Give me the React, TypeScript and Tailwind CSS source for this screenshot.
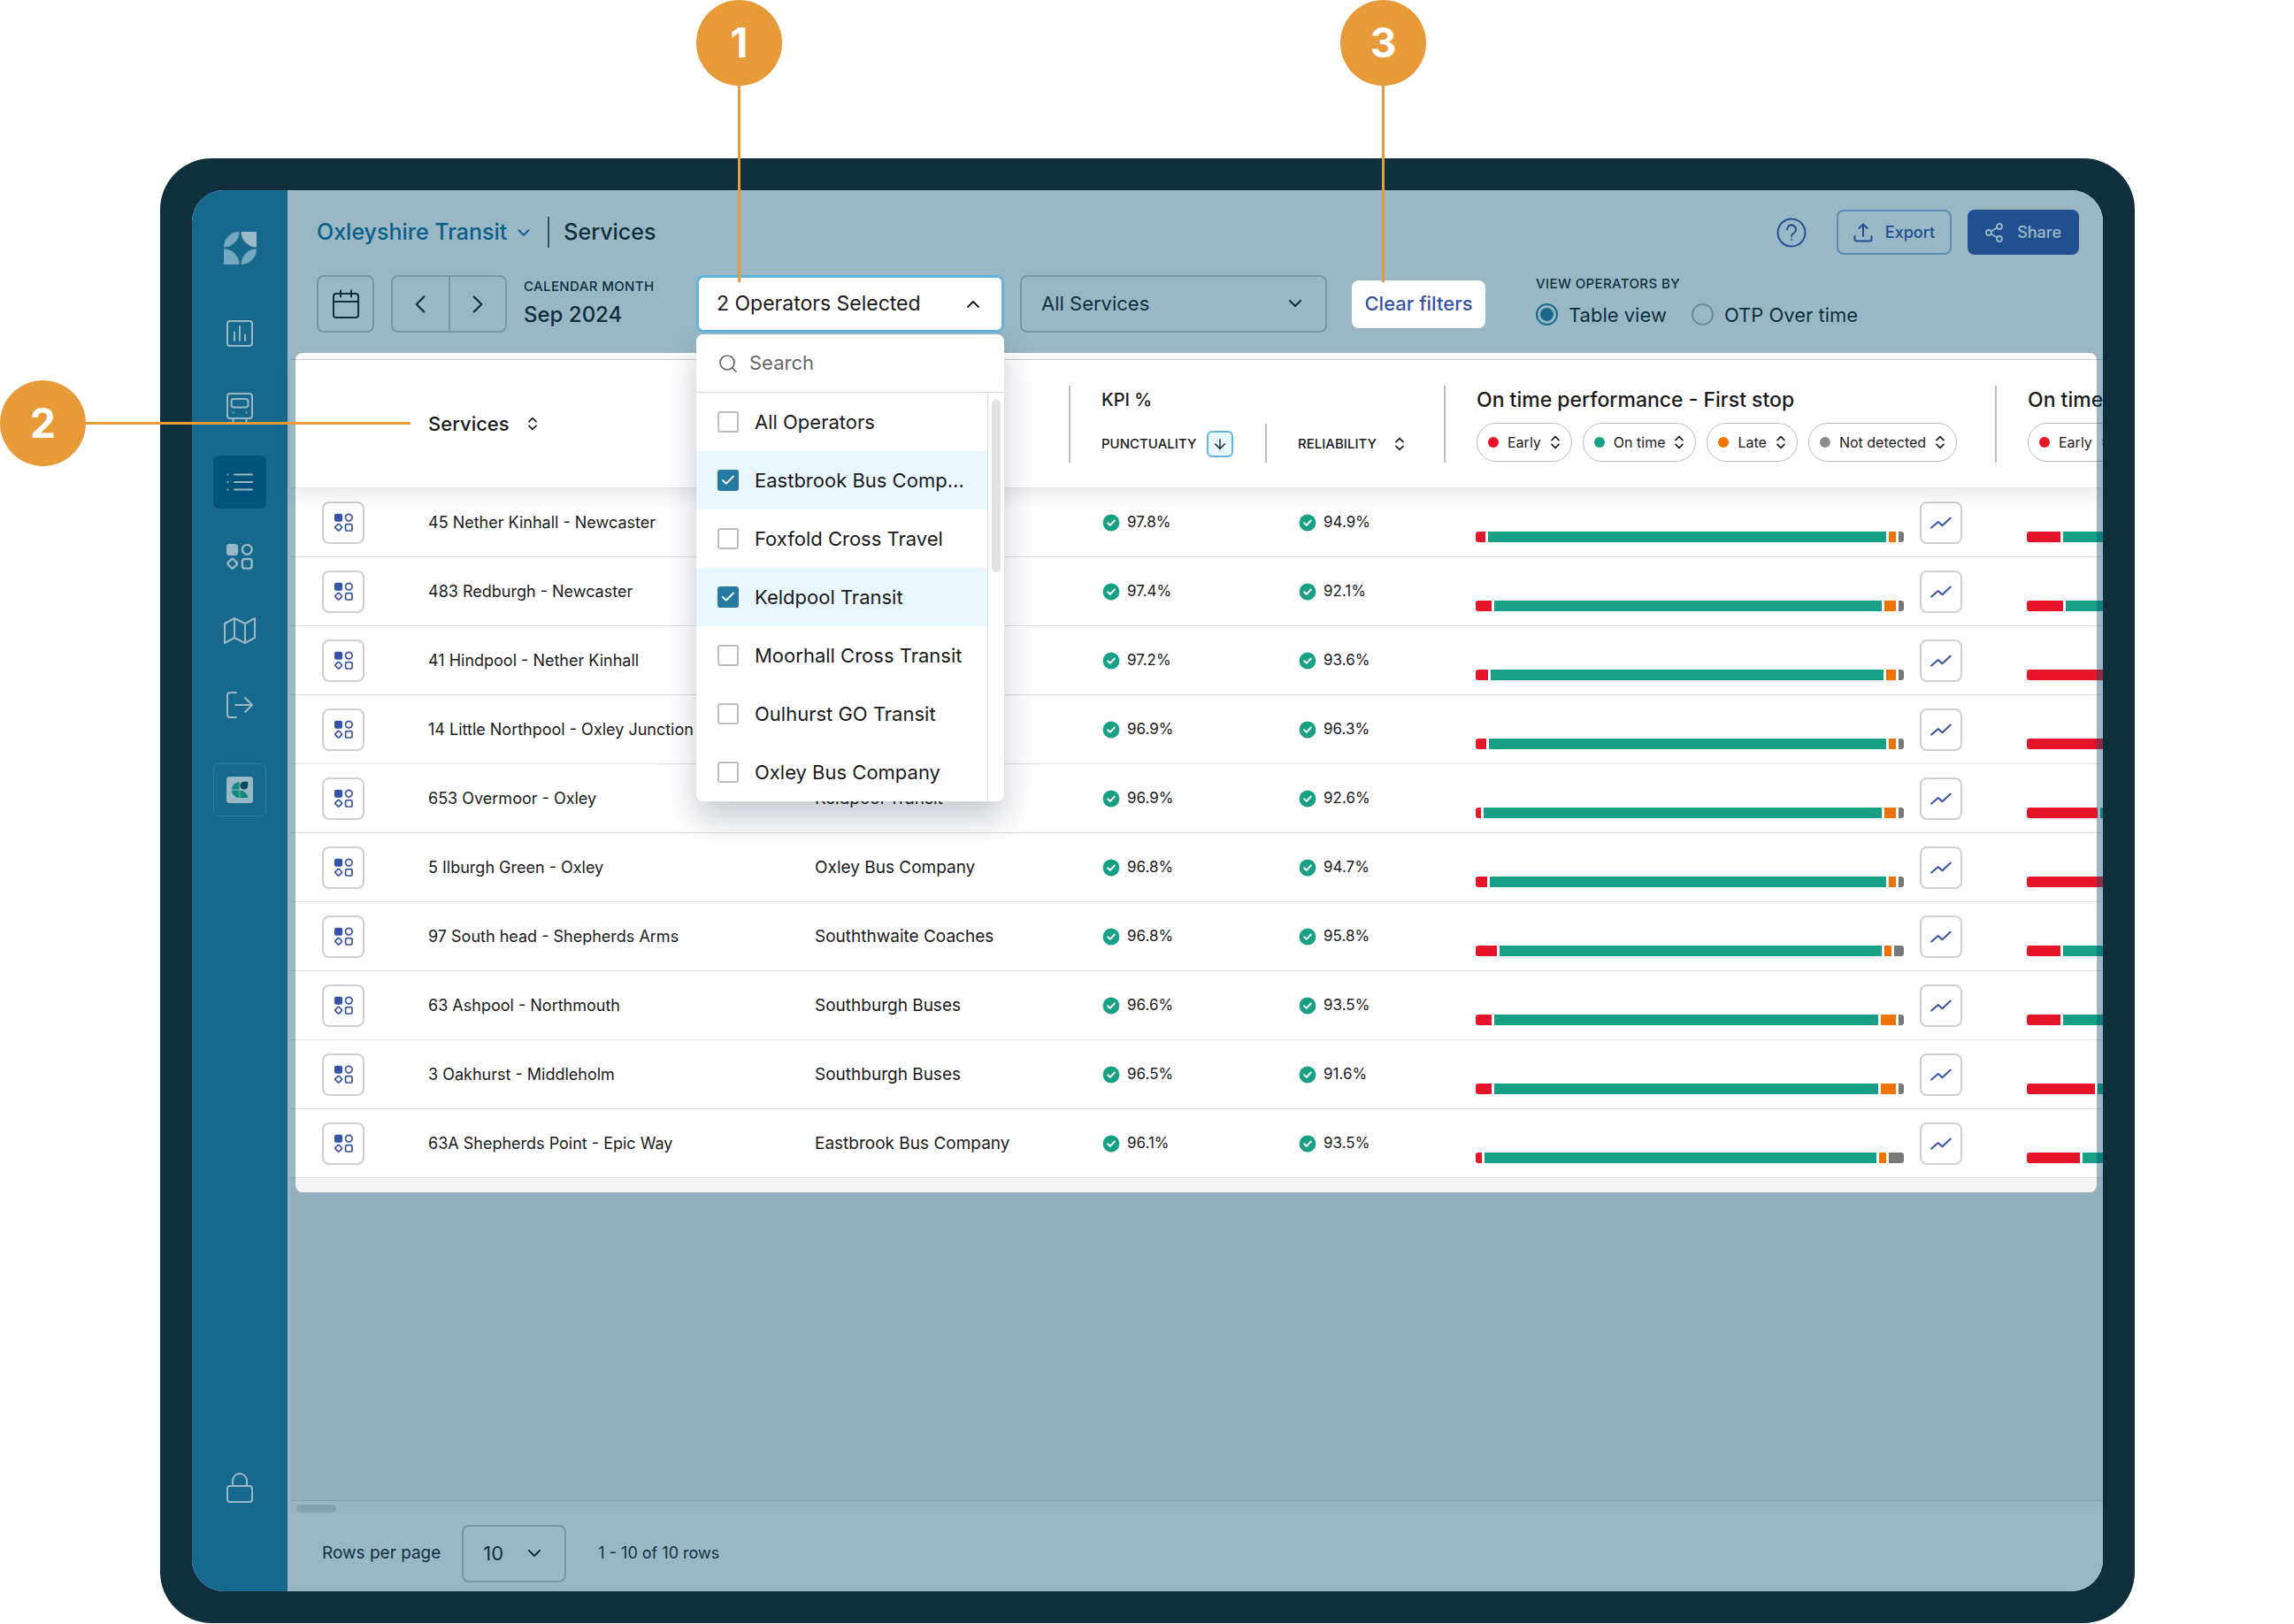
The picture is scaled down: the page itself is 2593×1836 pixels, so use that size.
import { useState } from "react";
import type { ReactNode } from "react";
import { ArrowDown, Check, ChevronDown, ChevronLeft, ChevronRight, ChevronUp, Search, Share2 } from "lucide-react";

type Row = {
  name: string;
  operator: string;
  punctuality: string;
  reliability: string;
  // pixel widths of early / late / not detected, on time takes the rest
  first: [number, number, number];
  nextEarly: number;
};

const rows: Row[] = [
  { name: "45 Nether Kinhall - Newcaster", operator: "Keldpool Transit", punctuality: "97.8%", reliability: "94.9%", first: [11, 8, 6], nextEarly: 38 },
  { name: "483 Redburgh - Newcaster", operator: "Keldpool Transit", punctuality: "97.4%", reliability: "92.1%", first: [18, 13, 6], nextEarly: 41 },
  { name: "41 Hindpool - Nether Kinhall", operator: "Keldpool Transit", punctuality: "97.2%", reliability: "93.6%", first: [14, 11, 6], nextEarly: 120 },
  { name: "14 Little Northpool - Oxley Junction", operator: "Keldpool Transit", punctuality: "96.9%", reliability: "96.3%", first: [12, 8, 6], nextEarly: 120 },
  { name: "653 Overmoor - Oxley", operator: "Keldpool Transit", punctuality: "96.9%", reliability: "92.6%", first: [6, 13, 6], nextEarly: 80 },
  { name: "5 Ilburgh Green - Oxley", operator: "Oxley Bus Company", punctuality: "96.8%", reliability: "94.7%", first: [13, 8, 6], nextEarly: 120 },
  { name: "97 South head - Shepherds Arms", operator: "Souththwaite Coaches", punctuality: "96.8%", reliability: "95.8%", first: [24, 8, 11], nextEarly: 38 },
  { name: "63 Ashpool - Northmouth", operator: "Southburgh Buses", punctuality: "96.6%", reliability: "93.5%", first: [18, 17, 6], nextEarly: 38 },
  { name: "3 Oakhurst - Middleholm", operator: "Southburgh Buses", punctuality: "96.5%", reliability: "91.6%", first: [18, 17, 6], nextEarly: 77 },
  { name: "63A Shepherds Point - Epic Way", operator: "Eastbrook Bus Company", punctuality: "96.1%", reliability: "93.5%", first: [7, 8, 17], nextEarly: 60 },
];

const operators = [
  "All Operators",
  "Eastbrook Bus Company",
  "Foxfold Cross Travel",
  "Keldpool Transit",
  "Moorhall Cross Transit",
  "Oulhurst GO Transit",
  "Oxley Bus Company",
];

function SortIcon() {
  return (
    <svg width="12" height="16" viewBox="0 0 12 16" fill="none" stroke="currentColor" strokeWidth="1.6" strokeLinecap="round" strokeLinejoin="round" className="shrink-0">
      <path d="M2 5.6 6 1.6l4 4M2 10.4l4 4 4-4" />
    </svg>
  );
}

function ShapesIcon({ className }: { className: string }) {
  return (
    <svg viewBox="0 0 30 30" fill="none" stroke="currentColor" strokeWidth="2.4" className={className}>
      <rect x="0" y="1" width="13" height="13" rx="3" fill="currentColor" stroke="none" />
      <circle cx="23.3" cy="7.3" r="5.4" />
      <path d="M5.7 18.1a1.4 1.4 0 0 1 2 0l4 4a1.4 1.4 0 0 1 0 2l-4 4a1.4 1.4 0 0 1-2 0l-4-4a1.4 1.4 0 0 1 0-2z" />
      <rect x="18" y="18" width="10.6" height="10.6" rx="2.6" />
    </svg>
  );
}

function TrendIcon() {
  return (
    <svg width="24" height="14" viewBox="0 0 24 14" fill="none" stroke="#3753a7" strokeWidth="2" strokeLinecap="round" strokeLinejoin="round">
      <path d="M1.2 12.6 8.8 6l4.6 4.3L22.8 1.6" />
    </svg>
  );
}

function Kpi({ value }: { value: string }) {
  return (
    <span className="flex items-center gap-2 text-[17px]">
      <svg width="20" height="20" viewBox="0 0 20 20" fill="none">
        <circle cx="10" cy="10" r="9.4" fill="#18a086" />
        <path d="m6.2 10.3 2.6 2.6 5-5.4" stroke="#fff" strokeWidth="2" strokeLinecap="round" strokeLinejoin="round" />
      </svg>
      {value}
    </span>
  );
}

function StatusPill({ label, dot }: { label: string; dot: string }) {
  return (
    <button className="flex h-11 shrink-0 items-center gap-2.5 rounded-full border border-[#bdbdbd] bg-white pl-3 pr-3 text-base">
      <span className={`size-3 rounded-full ${dot}`} />
      {label}
      <SortIcon />
    </button>
  );
}

function NavItem({ label, active, children }: { label: string; active?: boolean; children: ReactNode }) {
  return (
    <a href="#" aria-label={label} className={`flex size-[60px] items-center justify-center rounded-md ${active ? "bg-[#005a85]" : ""}`}>
      {children}
    </a>
  );
}

function Sidebar() {
  const stroke = { fill: "none", stroke: "currentColor", strokeWidth: 2, strokeLinecap: "round", strokeLinejoin: "round" } as const;
  return (
    <aside className="flex w-[108px] shrink-0 flex-col items-center bg-[#267da2] pb-[101px] pt-[47px] text-white">
      <svg width="37" height="37" viewBox="0 0 37 37" fill="#c1e6f7">
        <path d="M17.5 0A17.5 17.5 0 0 1 0 17.5 17.5 17.5 0 0 1 17.5 0z" />
        <path d="M37 0v17.5A17.5 17.5 0 0 1 19.5 0z" fill="#fff" />
        <path d="M0 37V19.5A17.5 17.5 0 0 1 17.5 37z" />
        <path d="M19.5 37A17.5 17.5 0 0 1 37 19.5 17.5 17.5 0 0 1 19.5 37z" />
      </svg>
      <nav className="mt-12 flex flex-col gap-6">
        <NavItem label="Dashboard">
          <svg width="30" height="30" viewBox="0 0 30 30" {...stroke}>
            <rect x="1" y="1" width="28" height="28" rx="3" />
            <path d="M9 13.5V23M15 7v16M21 16.500V23" />
          </svg>
        </NavItem>
        <NavItem label="Vehicles">
          <svg width="30" height="34" viewBox="0 0 30 34" {...stroke}>
            <rect x="1" y="1" width="28" height="28" rx="3" />
            <rect x="5.5" y="7" width="19" height="9.5" rx="3" />
            <path d="M7.5 22.5h.01M22.5 22.5h.01M7.500 29v4M22.500 29v4" />
          </svg>
        </NavItem>
        <NavItem label="Services" active>
          <svg width="30" height="24" viewBox="0 0 30 24" {...stroke}>
            <path d="M1.5 3.5h.01M1.5 12h.01M1.5 20.5h.01M9 3.5h20M9 12h20M9 20.5h20" />
          </svg>
        </NavItem>
        <NavItem label="Operators">
          <ShapesIcon className="size-[30px]" />
        </NavItem>
        <NavItem label="Map">
          <svg width="36" height="32" viewBox="0 0 36 32" {...stroke}>
            <path d="M1 8v22l11-6 12 6 11-6V2L24 8 12 2zM12 2v22M24 8v22" />
          </svg>
        </NavItem>
        <NavItem label="Log out">
          <svg width="30" height="30" viewBox="0 0 30 30" {...stroke}>
            <path d="M11 1H4a3 3 0 0 0-3 3v22a3 3 0 0 0 3 3h7M10 15h19M21 7l8 8-8 8" />
          </svg>
        </NavItem>
      </nav>
      <a href="#" aria-label="Account" className="mt-9 flex size-[60px] items-center justify-center rounded-md border border-[#4a9cc4]">
        <svg width="30" height="30" viewBox="0 0 30 30">
          <rect width="30" height="30" rx="3.5" fill="#fff" />
          <g fill="#1eb489">
            <path d="M14.5 14.6H6a8.6 8.6 0 0 1 8.5-8.6z" />
            <path d="M14.5 15.4V24A8.6 8.6 0 0 1 6 15.4z" />
            <path d="M15.4 15.4A8.8 8.8 0 0 1 24.2 24h-8.8z" />
          </g>
          <path d="M24.2 5.8v4.4a4.4 4.4 0 1 1-4.4-4.4z" fill="#07464d" />
        </svg>
      </a>
      <a href="#" aria-label="Privacy" className="mt-auto flex h-8 items-center justify-center">
        <svg width="30" height="34" viewBox="0 0 30 34" {...stroke}>
          <rect x="1" y="15" width="28" height="18" rx="3" />
          <path d="M7 15V9a8 8 0 0 1 16 0v6" />
        </svg>
      </a>
    </aside>
  );
}

function OperatorFilter() {
  const [selected, setSelected] = useState(["Eastbrook Bus Company", "Keldpool Transit"]);
  const [open, setOpen] = useState(true);

  function toggle(name: string) {
    setSelected(selected.includes(name) ? selected.filter((s) => s !== name) : [...selected, name]);
  }

  return (
    <div className="relative z-30 w-[348px] shrink-0 text-[22px]">
      <button
        onClick={() => setOpen(!open)}
        className="flex h-[65px] w-full items-center justify-between rounded-lg border-[3px] border-[#62b4dc] bg-white pl-5 pr-5 text-[23px]"
      >
        {selected.length} Operators Selected
        <ChevronUp size={24} strokeWidth={2} />
      </button>
      {open && (
        <div className="absolute inset-x-0 top-full mt-0.5 overflow-hidden rounded-lg bg-white shadow-[0_20px_36px_rgba(0,20,50,0.22)]">
          <label className="flex h-[66px] items-center gap-3 border-b border-[#d8d8d8] px-6 text-[#666]">
            <Search size={24} strokeWidth={1.7} />
            <input aria-label="Search operators" placeholder="Search" className="min-w-0 flex-1 outline-none placeholder:text-[#666]" />
          </label>
          <div className="flex">
            <ul className="min-w-0 flex-1 border-r border-[#dcdcdc]">
              {operators.map((name) => {
                const on = selected.includes(name);
                return (
                  <li key={name} className={on ? "bg-[#e9f7fe]" : ""}>
                    <label className="flex h-[66px] items-center gap-[18px] pl-6 pr-5">
                      <span className="grid shrink-0">
                        <input
                          type="checkbox"
                          checked={on}
                          onChange={() => toggle(name)}
                          className="col-start-1 row-start-1 size-6 appearance-none rounded-[3px] border-2 border-[#bebebe] bg-white checked:border-[#267aa2] checked:bg-[#267aa2]"
                        />
                        {on && <Check size={18} strokeWidth={2.4} className="pointer-events-none col-start-1 row-start-1 place-self-center text-white" />}
                      </span>
                      <span className="truncate">{name}</span>
                    </label>
                  </li>
                );
              })}
            </ul>
            <div className="w-[18px] shrink-0 px-1 pt-2">
              <div className="h-[195px] rounded-full bg-[#e2e2e2]" />
            </div>
          </div>
        </div>
      )}
    </div>
  );
}

function Header() {
  return (
    <header className="flex flex-col gap-[23px] border-b border-[#cfcfcf] bg-white pb-[30px] pl-[30px] pr-[27px] pt-[22px]">
      <div className="flex h-[51px] items-center">
        <button className="flex items-center gap-2 text-[25px] font-medium text-[#0f6d98]">
          Oxleyshire Transit
          <ChevronDown size={22} strokeWidth={2} />
        </button>
        <div className="ml-4 h-[35px] w-0.5 bg-[#555]" />
        <h1 className="ml-4 text-[25px] font-medium">Services</h1>
        <a href="#" aria-label="Help" className="ml-auto text-[#3753a7]">
          <svg width="34" height="34" viewBox="0 0 34 34" fill="none" stroke="currentColor" strokeWidth="2" strokeLinecap="round">
            <circle cx="17" cy="17" r="15.5" />
            <path d="M12 13.5a5 5 0 1 1 7.6 4.2c-1.7 1-2.6 1.9-2.6 3.6M17 25h.01" />
          </svg>
        </a>
        <button className="ml-[34px] flex h-[51px] items-center gap-3.5 rounded-lg border-2 border-[#9fb6e2] pl-[17px] pr-[17px] text-lg font-medium text-[#3753a7]">
          <svg width="22" height="22" viewBox="0 0 22 22" fill="none" stroke="currentColor" strokeWidth="2" strokeLinecap="round" strokeLinejoin="round">
            <path d="M11 15V2M6.5 6 11 1.5 15.5 6M1.5 15v3.5a2 2 0 0 0 2 2h15a2 2 0 0 0 2-2V15" />
          </svg>
          Export
        </button>
        <button className="ml-[18px] flex h-[51px] items-center gap-3.5 rounded-lg bg-[#3753a7] pl-[18px] pr-5 text-lg font-medium text-white">
          <Share2 size={24} strokeWidth={1.8} />
          Share
        </button>
      </div>

      <div className="flex h-[65px] items-center">
        <button aria-label="Pick dates" className="flex size-[65px] items-center justify-center rounded-lg border-2 border-[#c6c6c6]">
          <svg width="30" height="34" viewBox="0 0 30 34" fill="none" stroke="currentColor" strokeWidth="2" strokeLinecap="round" strokeLinejoin="round">
            <rect x="1" y="5" width="28" height="27" rx="3" />
            <path d="M1 14h28M9 1.5v7M21 1.5v7" />
          </svg>
        </button>
        <div className="ml-[19px] flex h-[65px] w-[131px] rounded-lg border-2 border-[#c6c6c6]">
          <button aria-label="Previous month" className="flex flex-1 items-center justify-center border-r-2 border-[#c6c6c6]">
            <ChevronLeft size={34} strokeWidth={1.6} />
          </button>
          <button aria-label="Next month" className="flex flex-1 items-center justify-center">
            <ChevronRight size={34} strokeWidth={1.6} />
          </button>
        </div>
        <div className="ml-[19px] w-[195px]">
          <p className="text-[15px] font-medium leading-6 tracking-wide">CALENDAR MONTH</p>
          <p className="text-2xl font-medium leading-10">Sep 2024</p>
        </div>
        <OperatorFilter />
        <div className="relative ml-[18px] w-[347px]">
          <select aria-label="Services filter" className="h-[65px] w-full appearance-none rounded-lg border-2 border-[#c6c6c6] px-[22px] text-[22px]">
            <option>All Services</option>
          </select>
          <ChevronDown size={24} strokeWidth={2} className="pointer-events-none absolute right-6 top-5" />
        </div>
        <button className="relative z-20 ml-7 h-[54px] w-[151px] rounded-lg bg-white text-[22px] font-medium text-[#3753a7]">
          Clear filters
        </button>
        <fieldset className="ml-[57px] pb-2">
          <legend className="text-[15px] font-medium leading-8 tracking-wide">VIEW OPERATORS BY</legend>
          <div className="flex items-center gap-7 text-[22px] leading-[38px]">
            {["Table view", "OTP Over time"].map((label, i) => (
              <label key={label} className="flex items-center gap-3">
                <input
                  type="radio"
                  name="view"
                  defaultChecked={i === 0}
                  className="size-[25px] appearance-none rounded-full border-2 border-[#b4b4b4] p-[3px] checked:border-[#267da2] checked:bg-[#267da2] checked:bg-clip-content"
                />
                {label}
              </label>
            ))}
          </div>
        </fieldset>
      </div>
    </header>
  );
}

function ServicesTable() {
  return (
    <table className="w-full table-fixed border-separate border-spacing-0 bg-white text-left text-lg">
      <colgroup>
        <col className="w-[156px]" />
        <col className="w-[437px]" />
        <col className="w-[287px]" />
        <col className="w-[222px]" />
        <col className="w-[202px]" />
        <col className="w-[623px]" />
        <col />
      </colgroup>
      <thead className="relative shadow-[0_8px_20px_rgba(0,0,0,0.09)]">
        <tr className="h-[145px] *:border-b *:border-[#e6e6e6] *:p-0 *:font-medium">
          <th aria-label="Actions" />
          <th className="text-[22px]">
            <button className="flex items-center gap-5">
              Services <SortIcon />
            </button>
          </th>
          <th aria-label="Operator" />
          <th>
            <div className="h-[87px] border-l-2 border-[#bbb] pl-[35px]">
              <p className="text-xl leading-8">KPI %</p>
              <div className="mt-3 flex h-11 items-center gap-3 text-[15px]">
                PUNCTUALITY
                <button aria-label="Sort by punctuality" className="flex size-[30px] items-center justify-center rounded-md border-2 border-[#62b4dc] bg-[#e9f7fe]">
                  <ArrowDown size={18} strokeWidth={1.8} />
                </button>
              </div>
            </div>
          </th>
          <th>
            <div className="flex h-[87px] items-end">
              <button className="flex h-11 items-center gap-5 border-l-2 border-[#bbb] pl-[35px] pt-0.5 text-[15px]">
                RELIABILITY <SortIcon />
              </button>
            </div>
          </th>
          <th>
            <div className="h-[87px] border-l-2 border-[#bbb] pl-[35px]">
              <p className="text-[23px] leading-8">On time performance - First stop</p>
              <div className="mt-2.5 flex gap-3 font-normal">
                <StatusPill label="Early" dot="bg-[#e61428]" />
                <StatusPill label="On time" dot="bg-[#18a086]" />
                <StatusPill label="Late" dot="bg-[#f07300]" />
                <StatusPill label="Not detected" dot="bg-[#8c8c8c]" />
              </div>
            </div>
          </th>
          <th>
            <div className="h-[87px] overflow-hidden whitespace-nowrap border-l-2 border-[#bbb] pl-[35px]">
              <p className="text-[23px] leading-8">On time</p>
              <div className="mt-2.5 flex gap-3 font-normal">
                <StatusPill label="Early" dot="bg-[#e61428]" />
              </div>
            </div>
          </th>
        </tr>
      </thead>
      <tbody>
        {rows.map((row) => (
          <tr key={row.name} className="h-[78px] *:border-b *:border-[#dedede] *:p-0">
            <td>
              <button aria-label="Service breakdown" className="ml-9 flex size-12 items-center justify-center rounded-lg border-2 border-[#d0d0d0] bg-white text-[#3753a7]">
                <ShapesIcon className="size-[21px]" />
              </button>
            </td>
            <td className="whitespace-nowrap">{row.name}</td>
            <td className="text-[19px]">{row.operator}</td>
            <td>
              <div className="pl-[38px]">
                <Kpi value={row.punctuality} />
              </div>
            </td>
            <td>
              <div className="pl-[38px]">
                <Kpi value={row.reliability} />
              </div>
            </td>
            <td>
              <div className="flex items-center gap-[18px] pl-9">
                <div className="mt-8 flex h-3 w-[484px] gap-[3px] overflow-hidden rounded-[3px]">
                  <div className="bg-[#e61428]" style={{ width: row.first[0] }} />
                  <div className="flex-1 bg-[#18a086]" />
                  <div className="bg-[#f07300]" style={{ width: row.first[1] }} />
                  <div className="bg-[#787878]" style={{ width: row.first[2] }} />
                </div>
                <button aria-label="Show trend" className="flex size-12 items-center justify-center rounded-lg border-2 border-[#d0d0d0] bg-white">
                  <TrendIcon />
                </button>
              </div>
            </td>
            <td>
              <div className="overflow-hidden pl-9 pt-8">
                <div className="flex h-3 w-[484px] gap-[3px] overflow-hidden rounded-[3px]">
                  <div className="bg-[#e61428]" style={{ width: row.nextEarly }} />
                  <div className="flex-1 bg-[#18a086]" />
                </div>
              </div>
            </td>
          </tr>
        ))}
      </tbody>
    </table>
  );
}

function Footer() {
  return (
    <footer className="border-t border-[#d4d4d4] bg-white">
      <div className="h-4 bg-[#fdfdfd] py-1 pl-[7px]">
        <div className="h-[9px] w-[45px] rounded-full bg-[#dadada]" />
      </div>
      <div className="flex h-[86px] items-center pl-9 text-lg">
        <label htmlFor="per-page" className="text-[19px]">Rows per page</label>
        <div className="relative ml-6 w-[118px]">
          <select id="per-page" className="h-[65px] w-full appearance-none rounded-lg border-2 border-[#c6c6c6] px-[22px] text-[22px]">
            <option>10</option>
          </select>
          <ChevronDown size={24} strokeWidth={2} className="pointer-events-none absolute right-6 top-5" />
        </div>
        <p className="ml-9">1 - 10 of 10 rows</p>
      </div>
    </footer>
  );
}

const badge = "flex size-[97px] shrink-0 items-center justify-center rounded-full bg-[#e99a38] text-[46px] font-bold text-white";

export default function App() {
  return (
    <div className="relative flex min-h-screen flex-col overflow-hidden bg-white pb-px pl-[181px] pr-[180px] pt-[179px] font-[Inter,'Noto_Sans',sans-serif] text-[#1a1a1a]">
      <div className="flex flex-1 rounded-[58px] bg-[#102f3c] p-9">
        <div className="relative flex flex-1 overflow-hidden rounded-[36px] bg-white">
          <Sidebar />
          <main className="flex min-w-0 flex-1 flex-col pl-[3px]">
            <Header />
            <div className="relative">
              <ServicesTable />
              {/* dims everything outside the table */}
              <div className="pointer-events-none absolute -bottom-4 -top-2 left-1.5 right-[7px] z-10 rounded-lg shadow-[0_0_0_3000px_rgba(0,75,110,0.4)]" />
            </div>
            <div className="flex-1 bg-[#f4f4f4]" />
            <Footer />
          </main>
        </div>
      </div>

      {/* numbered callouts */}
      <div className="absolute left-[787px] top-0 z-40 flex flex-col items-center">
        <span className={badge}>1</span>
        <span className="h-[222px] w-[3px] bg-[#e99a38]" />
      </div>
      <div className="absolute left-[1515px] top-0 z-40 flex flex-col items-center">
        <span className={badge}>3</span>
        <span className="h-[222px] w-[3px] bg-[#e99a38]" />
      </div>
      <div className="absolute left-0 top-[430px] z-40 flex items-center">
        <span className={badge}>2</span>
        <span className="h-[3px] w-[367px] bg-[#e99a38]" />
      </div>
    </div>
  );
}
